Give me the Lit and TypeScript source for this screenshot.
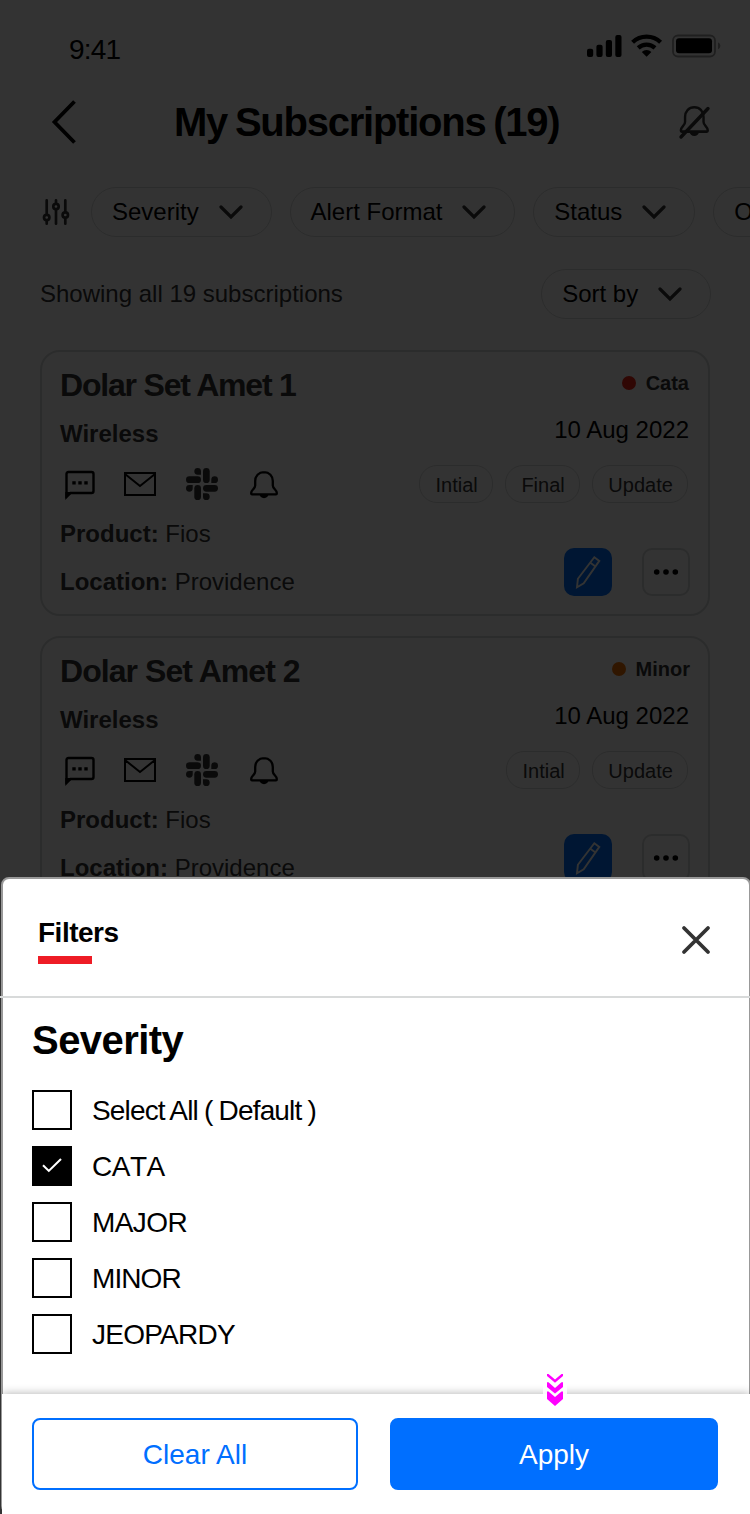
import { LitElement, html, css, svg, nothing } from "lit";
import { customElement, property, state } from "lit/decorators.js";
import { classMap } from "lit/directives/class-map.js";

interface Subscription {
  name: string;
  line: string;
  severity: string;
  tone: string;
  date: string;
  tags: string[];
  product: string;
  location: string;
}

const SUBSCRIPTIONS: Subscription[] = [
  { name: "Dolar Set Amet 1", line: "Wireless", severity: "Cata", tone: "cata", date: "10 Aug 2022", tags: ["Intial", "Final", "Update"], product: "Fios", location: "Providence" },
  { name: "Dolar Set Amet 2", line: "Wireless", severity: "Minor", tone: "minor", date: "10 Aug 2022", tags: ["Intial", "Update"], product: "Fios", location: "Providence" },
];

const bellShape = svg`
  <path d="M14 1.2C8.6 1.2 5.2 5 5.2 10v4.6c0 3.2-4 4.2-4 7.4v.6c0 .4.3.7.8.7h24c.5 0 .8-.3.8-.7V22c0-3.2-4-4.2-4-7.4V10c0-5-3.4-8.8-8.8-8.8z" fill="none" stroke="currentColor" stroke-width="2.3" stroke-linejoin="round"/>
  <path d="M9.6 23.3a4.4 3.9 0 0 0 8.8 0z" fill="currentColor"/>`;

@customElement("pill-button")
class PillButton extends LitElement {
  @property() label = "";
  static styles = css`
    :host { display: block; flex: none; }
    .pill {
      box-sizing: border-box; height: 50px; display: flex; align-items: center;
      border: 1px solid #d8dada; border-radius: 25px; padding: 0 28px 0 20px; gap: 19.8px;
      font: 24px/48px "Liberation Sans", Arial, sans-serif; color: #000; white-space: nowrap;
    }
    svg { display: block; flex: none; color: #333; }
  `;
  render() {
    return html`<div class="pill"><span>${this.label}</span>
      <svg width="24" height="16" viewBox="0 0 24 16"><path d="M2 3l10 10L22 3" fill="none" stroke="currentColor" stroke-width="3.2" stroke-linecap="round" stroke-linejoin="miter"/></svg>
    </div>`;
  }
}

@customElement("subscription-card")
class SubscriptionCard extends LitElement {
  @property({ attribute: false }) item!: Subscription;
  static styles = css`
    :host { display: block; }
    .card {
      box-sizing: border-box; height: 266px; border: 2px solid #d8dada; border-radius: 20px;
      padding: 9px 18px 0; display: flex; justify-content: space-between;
      font: 24px "Liberation Sans", Arial, sans-serif; color: #333; white-space: nowrap;
    }
    .title { font-size: 32px; font-weight: 700; line-height: 48px; letter-spacing: -1.2px; }
    .title.minor-title { letter-spacing: -0.95px; }
    .line { box-sizing: border-box; height: 48px; padding-top: 1px; font-weight: 700; line-height: 48px; }
    .channels { height: 54px; display: flex; align-items: center; color: #000; padding-left: 4px; }
    .channels svg { display: block; }
    .chat { margin: 1px 28px 0 0; }
    .mail { margin-right: 30px; }
    .slack { margin-right: 32px; color: #333; }
    .bell { margin-top: 1px; }
    .product { line-height: 45px; }
    .location { line-height: 51px; }
    .side { display: flex; flex-direction: column; align-items: flex-end; }
    .severity { display: flex; align-items: center; gap: 10px; height: 45px; font-size: 20px; font-weight: 700; }
    .severity.cata { padding-right: 1px; }
    .dot { width: 14px; height: 14px; border-radius: 50%; margin-bottom: 1px; }
    .cata .dot { background: #ed2415; }
    .minor .dot { background: #ed7000; }
    .date { line-height: 48px; color: #000; padding-right: 1px; }
    .tags { display: flex; gap: 12px; margin: 11px 2px 0 0; }
    .tag {
      box-sizing: border-box; height: 38px; border: 1px solid #d8dada; border-radius: 18px;
      padding: 1px 14.2px 0 15.4px; font-size: 20px; line-height: 37px;
    }
    .actions { display: flex; gap: 30px; margin-top: 45px; }
    .edit { width: 48px; height: 48px; border-radius: 10px; background: #006fff; }
    .more { box-sizing: border-box; width: 48px; height: 48px; border-radius: 10px; border: 2px solid #d8dada; color: #000; }
    .edit svg, .more svg { display: block; }
  `;
  render() {
    const s = this.item;
    return html`<article class="card">
      <div>
        <div class="title ${s.tone}-title">${s.name}</div>
        <div class="line">${s.line}</div>
        <div class="channels">
          <svg class="chat" width="32" height="32" viewBox="0 0 32 32"><path d="M2.5 27V5q0-2 2-2h23q2 0 2 2v17q0 2-2 2h-21z" fill="none" stroke="currentColor" stroke-width="2.4"/><path d="M1.3 23h7.500L1.3 31z" fill="currentColor"/><path d="M8.3 12.2h3.4v3.4H8.3zM14.3 12.2h3.4v3.4h-3.4zM20.3 12.2h3.4v3.4h-3.4z" fill="currentColor"/></svg>
          <svg class="mail" width="32" height="24" viewBox="0 0 32 24"><path d="M1 1h30v22H1z M1 2l15 12L31 2" fill="none" stroke="currentColor" stroke-width="2"/></svg>
          <svg class="slack" width="32" height="32" viewBox="0 0 32 32" fill="currentColor">
            <rect x="17" y="0" width="6.7" height="15" rx="3.35"/><rect x="0" y="8.3" width="15" height="6.7" rx="3.35"/>
            <rect x="8.3" y="17" width="6.7" height="15" rx="3.35"/><rect x="17" y="17" width="15" height="6.7" rx="3.35"/>
            <path d="M15 6.7h-3.35A3.35 3.35 0 1 1 15 3.35zM25.3 15v-3.35A3.35 3.35 0 1 1 28.65 15zM17 25.3h3.35A3.35 3.35 0 1 1 17 28.65zM6.7 17v3.35A3.35 3.35 0 1 1 3.35 17z"/>
          </svg>
          <svg class="bell" width="28" height="28" viewBox="0 0 28 28">${bellShape}</svg>
        </div>
        <div class="product"><b>Product:</b> ${s.product}</div>
        <div class="location"><b>Location:</b> ${s.location}</div>
      </div>
      <div class="side">
        <div class="severity ${s.tone}"><span class="dot"></span>${s.severity}</div>
        <div class="date">${s.date}</div>
        <div class="tags">${s.tags.map((t) => html`<span class="tag">${t}</span>`)}</div>
        <div class="actions">
          <div class="edit"><svg width="48" height="48" viewBox="0 0 48 48"><path d="M30.3 9.2l5 3.7-15.6 22.4-6.7 3.9.9-8.4zM26.7 14.9l4.8 3.5" fill="none" stroke="#fff" stroke-width="1.9"/></svg></div>
          <div class="more"><svg width="44" height="44" viewBox="0 0 44 44" fill="currentColor"><circle cx="12.7" cy="22" r="2.8"/><circle cx="22" cy="22" r="2.8"/><circle cx="31.3" cy="22" r="2.8"/></svg></div>
        </div>
      </div>
    </article>`;
  }
}

@customElement("filter-sheet")
class FilterSheet extends LitElement {
  @state() private options = [
    { label: "Select All ( Default )", cls: "all", on: false },
    { label: "CATA", cls: "cata", on: true },
    { label: "MAJOR", cls: "major", on: false },
    { label: "MINOR", cls: "minor", on: false },
    { label: "JEOPARDY", cls: "jeopardy", on: false },
  ];

  private toggle(index: number) {
    this.options = this.options.map((o, i) => (i === index ? { ...o, on: !o.on } : o));
  }

  static styles = css`
    :host { display: block; font-family: "Liberation Sans", Arial, sans-serif; color: #000; }
    .sheet {
      box-sizing: border-box; width: 750px; height: 637px; background: #fff;
      border: 2px solid #999; border-radius: 8px; display: flex; flex-direction: column;
    }
    .head {
      box-sizing: border-box; height: 119px; margin: 0 -3px; border-bottom: 2px solid #d8dada;
      display: flex; justify-content: space-between; padding: 38px 41px 0 38px;
    }
    .heading { font-size: 28px; line-height: 32px; font-weight: 700; letter-spacing: -0.5px; }
    .heading::after { content: ""; display: block; width: 54px; height: 8px; margin-top: 7px; background: #ee1c25; }
    .close { display: block; margin-top: 8px; }
    .body { flex: 1; padding: 19px 29px 0; }
    h2 { margin: 0; font-size: 40px; line-height: 46px; letter-spacing: -0.55px; }
    .list { display: grid; gap: 16px; margin-top: 27px; }
    .option { display: flex; align-items: center; gap: 20px; height: 40px; font-size: 28px; line-height: 38px; white-space: pre; }
    .option span { padding-top: 2px; }
    .box { box-sizing: border-box; width: 40px; height: 40px; border: 2px solid #000; background: #fff; }
    .box.on { background: #000; }
    .box svg { display: block; }
    .all { letter-spacing: -0.85px; word-spacing: -0.8px; }
    .cata { letter-spacing: -0.5px; font-kerning: none; }
    .major { letter-spacing: -0.6px; }
    .minor { letter-spacing: -0.9px; }
    .jeopardy { letter-spacing: -0.75px; }
    .foot {
      position: relative; box-sizing: border-box; height: 120px; margin: 0 -1px -2px; background: #fff;
      box-shadow: 0 0 9px rgba(0, 0, 0, 0.32); padding: 24px 30px;
      display: grid; grid-template-columns: 326px 328px; gap: 32px;
      clip-path: inset(-24px 0 0 0);
    }
    .btn {
      box-sizing: border-box; height: 72px; border: 2px solid #006fff; border-radius: 8px;
      font-size: 28px; line-height: 69px; text-align: center; color: #006fff;
    }
    .btn.primary { background: #006fff; color: #fff; }
    .hint { position: absolute; left: 541px; top: -20px; }
  `;

  render() {
    return html`<section class="sheet">
      <header class="head">
        <div class="heading">Filters</div>
        <svg class="close" width="30" height="30" viewBox="0 0 30 30"><path d="M3 3l24 24M27 3L3 27" stroke="#333" stroke-width="3.8" stroke-linecap="round"/></svg>
      </header>
      <div class="body">
        <h2>Severity</h2>
        <div class="list">
          ${this.options.map(
            (o, i) => html`<div class="option" @click=${() => this.toggle(i)}><div class=${classMap({ box: true, on: o.on })}>${o.on
              ? html`<svg width="36" height="36" viewBox="0 0 36 36"><path d="M9 17.3l5.8 5.600L27 11" fill="none" stroke="#fff" stroke-width="2.1"/></svg>`
              : nothing}</div><span class=${o.cls}>${o.label}</span></div>`
          )}
        </div>
      </div>
      <footer class="foot">
        <div class="btn">Clear All</div>
        <div class="btn primary">Apply</div>
        <svg class="hint" width="24" height="32" viewBox="0 0 24 32">
          <rect width="24" height="24" y="8" fill="#fff" opacity=".85"/>
          <path d="M4 0h1.5L12 5.6 18.5 0H20v2L12 8.8 4 2zM4 8.2h1.5L12 14l6.5-5.800H20V13l-8 6.400L4 13zM4 17.500h1.5L12 23l6.500-5.500H20v7.500l-8 7-8-7z" fill="#f0f"/>
        </svg>
      </footer>
    </section>`;
  }
}

@customElement("app-root")
class AppRoot extends LitElement {
  static styles = css`
    :host { display: block; width: 750px; height: 1514px; position: relative; overflow: hidden; background: #fff; font-family: "Liberation Sans", Arial, sans-serif; color: #000; }
    svg { display: block; }
    .status { box-sizing: border-box; height: 86px; padding: 33px 29px 0 69px; display: flex; justify-content: space-between; }
    .time { font-size: 28px; line-height: 34px; letter-spacing: -0.8px; }
    .nav { height: 72px; display: flex; align-items: center; padding: 0 39px 0 50px; }
    .page-title { flex: 1; margin: 0; padding-left: 96px; font-size: 40px; line-height: 46px; letter-spacing: -1.25px; word-spacing: -2px; white-space: nowrap; }
    .chips { margin-top: 29px; height: 50px; display: flex; align-items: center; gap: 18px; padding-left: 41px; overflow: hidden; }
    .sliders { flex: none; margin-right: 2px; color: #333; }
    .summary { margin-top: 32px; height: 50px; display: flex; align-items: center; justify-content: space-between; padding: 0 39px 0 40px; font-size: 24px; color: #333; }
    .cards { margin: 31px 40px 0; display: grid; gap: 20px; }
    .scrim { position: absolute; inset: 0; background: rgba(0, 0, 0, 0.8); }
    .overlay { position: absolute; left: 1px; top: 877px; }
    .muted { color: #333; }
  `;

  render() {
    return html`
      <div class="status">
        <div class="time">9:41</div>
        <svg width="136" height="26" viewBox="0 0 136 26" fill="#000">
          <rect x="2" y="15.7" width="6.2" height="8.3" rx="2"/><rect x="11.4" y="11.7" width="6.2" height="12.3" rx="2"/><rect x="20.8" y="7" width="6.2" height="17" rx="2"/><rect x="30.3" y="2" width="6.2" height="22" rx="2"/>
          <g fill="none" stroke="#000" stroke-width="4.2"><path d="M47.6 9.2a20.3 20.3 0 0 1 28 0"/><path d="M53.2 14.9a12.3 12.3 0 0 1 16.8 0"/></g>
          <path d="M61.6 23.8l-4.8-4.9a7 7 0 0 1 9.6 0z"/>
          <rect x="88" y="2.5" width="42" height="21" rx="5" fill="none" stroke="#000" stroke-width="1.8" opacity=".4"/>
          <rect x="91" y="5.3" width="36" height="15" rx="3"/>
          <path d="M133 9.3v7q2.4-1 2.4-3.5t-2.4-3.5z" opacity=".4"/>
        </svg>
      </div>
      <nav class="nav">
        <svg width="28" height="44" viewBox="0 0 28 44"><path d="M24.5 1.5L4.5 22l20 20.500" fill="none" stroke="#000" stroke-width="3.8"/></svg>
        <h1 class="page-title">My Subscriptions (19)</h1>
        <svg class="muted" width="34" height="36" viewBox="0 0 34 36">
          <g transform="translate(2.600 2) scale(1.05 1.1)">${bellShape}</g>
          <path d="M4 33L31 4.500" stroke="currentColor" stroke-width="3.4" stroke-linecap="round"/>
        </svg>
      </nav>
      <div class="chips">
        <svg class="sliders" width="30" height="30" viewBox="0 0 30 30" fill="none" stroke="currentColor" stroke-width="2.7" stroke-linecap="round">
          <path d="M5.700 3.300V17.500M5.700 23.500V26.700M15 3.300V5.500M15 12.500V26.700M24.300 3.300V15M24.300 21.500V26.700"/>
          <circle cx="5.700" cy="20.500" r="2.700"/><circle cx="15" cy="9.500" r="2.700"/><circle cx="24.300" cy="18" r="2.700"/>
        </svg>
        <pill-button label="Severity"></pill-button>
        <pill-button label="Alert Format"></pill-button>
        <pill-button label="Status"></pill-button>
        <pill-button label="O"></pill-button>
      </div>
      <div class="summary"><span>Showing all 19 subscriptions</span><pill-button label="Sort by"></pill-button></div>
      <div class="cards">${SUBSCRIPTIONS.map((s) => html`<subscription-card .item=${s}></subscription-card>`)}</div>
      <div class="scrim"></div>
      <filter-sheet class="overlay"></filter-sheet>
    `;
  }
}
